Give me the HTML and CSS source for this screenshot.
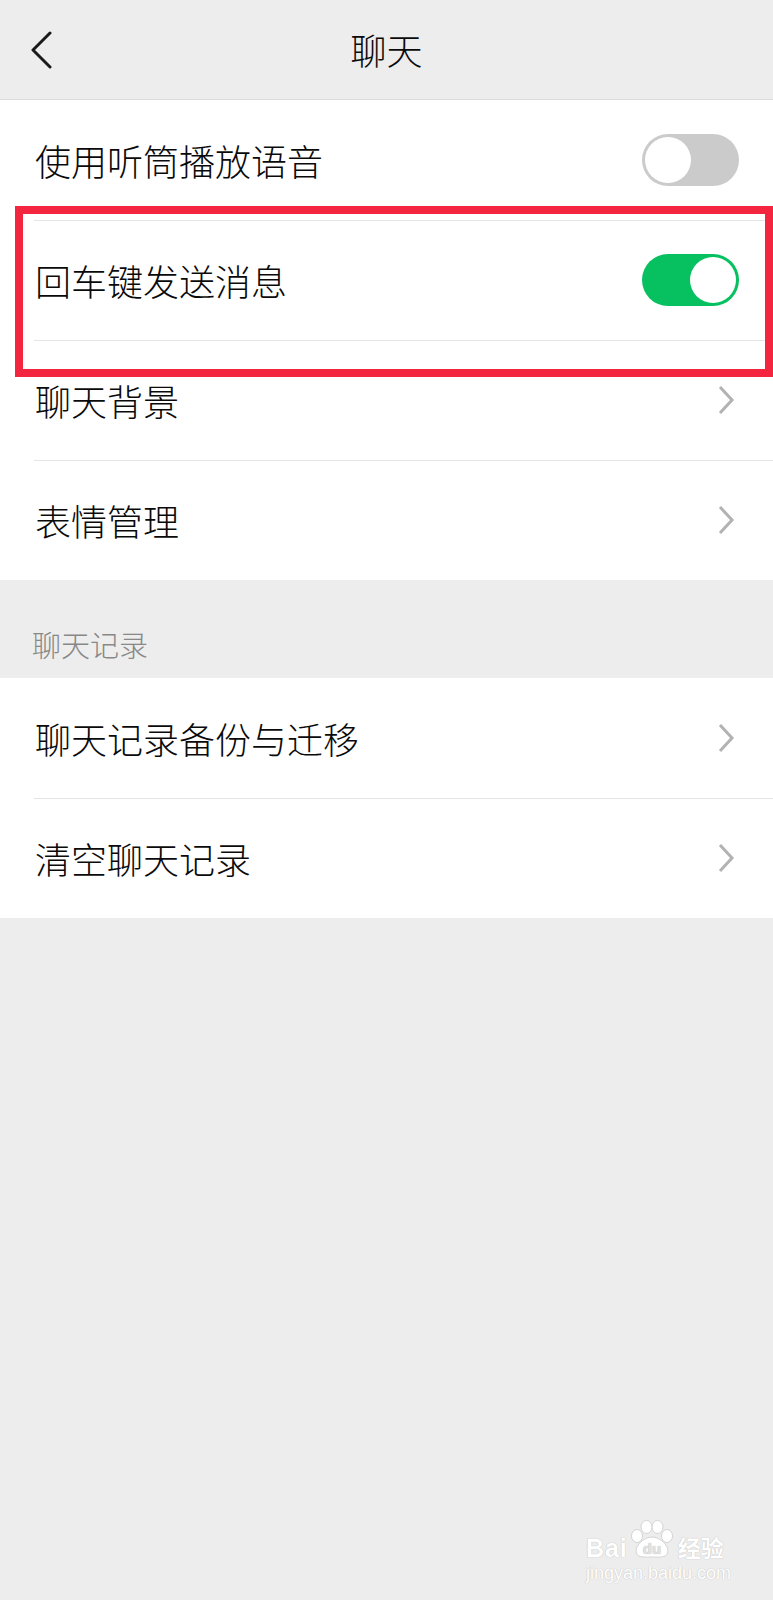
FILE: index.html
```html
<!DOCTYPE html>
<html>
<head>
  <meta charset="utf-8">
  <title>聊天</title>
  <link rel="stylesheet" href="styles.css">
</head>
<body>
  <div class="page">
    <div class="topbar">
      <span class="back">
        <svg width="24" height="38" viewBox="0 0 24 38"><polyline points="20,2 3,19 20,36" fill="none" stroke="#1a1a1a" stroke-width="3" stroke-linecap="round" stroke-linejoin="round"/></svg>
      </span>
      <h1>聊天</h1>
      <span></span>
    </div>

    <div class="group">
      <div class="cell">
        <span class="label">使用听筒播放语音</span>
        <span class="switch"></span>
      </div>
      <div class="cell">
        <span class="label">回车键发送消息</span>
        <span class="switch on"></span>
      </div>
      <div class="cell">
        <span class="label">聊天背景</span>
        <svg class="arrow" width="18" height="30" viewBox="0 0 18 30"><polyline points="3,2 15,15 3,28" fill="none" stroke="#b2b2b2" stroke-width="3"/></svg>
      </div>
      <div class="cell">
        <span class="label">表情管理</span>
        <svg class="arrow" width="18" height="30" viewBox="0 0 18 30"><polyline points="3,2 15,15 3,28" fill="none" stroke="#b2b2b2" stroke-width="3"/></svg>
      </div>
      <!-- red annotation box -->
      <div class="mark"></div>
    </div>

    <div class="group-title">聊天记录</div>

    <div class="group">
      <div class="cell">
        <span class="label">聊天记录备份与迁移</span>
        <svg class="arrow" width="18" height="30" viewBox="0 0 18 30"><polyline points="3,2 15,15 3,28" fill="none" stroke="#b2b2b2" stroke-width="3"/></svg>
      </div>
      <div class="cell">
        <span class="label">清空聊天记录</span>
        <svg class="arrow" width="18" height="30" viewBox="0 0 18 30"><polyline points="3,2 15,15 3,28" fill="none" stroke="#b2b2b2" stroke-width="3"/></svg>
      </div>
    </div>

    <div class="watermark">
      <div class="wm-top">
        <span class="wm-bai">Bai</span>
        <svg class="paw" width="44" height="38" viewBox="0 0 44 38">
          <g fill="#fff" stroke="#d4d4d4" stroke-width="1">
            <ellipse cx="7" cy="16" rx="5.5" ry="6.5"/>
            <ellipse cx="16.5" cy="7" rx="5.5" ry="6.5"/>
            <ellipse cx="27.5" cy="7" rx="5.5" ry="6.5"/>
            <ellipse cx="37" cy="16" rx="5.5" ry="6.5"/>
            <path d="M22 17 C30 17 38 25 38 31 C38 37 32 37.5 22 37 C12 37.5 6 37 6 31 C6 25 14 17 22 17 Z"/>
          </g>
          <text x="22" y="34" text-anchor="middle" font-family="Liberation Sans, sans-serif" font-weight="bold" font-size="15" fill="#e2e2e2">du</text>
        </svg>
        <span class="wm-jy">经验</span>
      </div>
      <div class="wm-url">jingyan.baidu.com</div>
    </div>
  </div>
</body>
</html>
```

FILE: styles.css
```css
body {
  margin: 0;
  background-color: #ededed;
  font-family: "Noto Sans CJK SC", "Noto Sans", sans-serif;
  color: #0a0a0a;
}

.page {
  position: relative;
  min-height: 1600px;
}

.topbar {
  height: 100px;
  box-sizing: border-box;
  border-bottom: 1px solid #dcdcdc;
  display: grid;
  grid-template-columns: 1fr auto 1fr;
  align-items: center;
}

.back {
  padding-left: 30px;
  display: flex;
  align-items: center;
}

.topbar h1 {
  margin: 0;
  font-size: 36px;
  font-weight: 300;
  line-height: 1;
  padding-bottom: 2px;
}

.group {
  position: relative;
  background-color: #fff;
}

.cell {
  position: relative;
  height: 120px;
  display: flex;
  align-items: center;
  justify-content: space-between;
  padding: 0 34px 0 35px;
}

.cell + .cell::before {
  content: "";
  position: absolute;
  top: 0;
  left: 34px;
  right: 0;
  height: 1px;
  background-color: #e5e5e5;
}

.label {
  font-size: 36px;
  font-weight: 300;
  line-height: 1;
}

.arrow {
  margin-right: 4px;
}

.switch {
  position: relative;
  width: 97px;
  height: 52px;
  border-radius: 26px;
  background-color: #cbcbcb;
}

.switch::after {
  content: "";
  position: absolute;
  top: 3px;
  left: 3px;
  width: 46px;
  height: 46px;
  border-radius: 50%;
  background-color: #fff;
}

.switch.on {
  background-color: #07c160;
}

.switch.on::after {
  left: 48px;
}

.mark {
  position: absolute;
  top: 106px;
  left: 15px;
  right: 0;
  height: 171px;
  box-sizing: border-box;
  border: 8px solid #f4253f;
}

.group-title {
  height: 98px;
  box-sizing: border-box;
  padding: 46px 0 0 32px;
  font-size: 29px;
  font-weight: 300;
  line-height: 36px;
  color: #888;
}

.watermark {
  position: absolute;
  right: 42px;
  bottom: 17px;
  color: #fff;
  font-family: "Liberation Sans", sans-serif;
  text-shadow: 0 0 1px #c4c4c4, 0 0 1px #c4c4c4;
}

.wm-top {
  display: flex;
  align-items: flex-end;
}

.wm-bai {
  font-size: 25px;
  font-weight: bold;
  line-height: 20px;
  letter-spacing: 1px;
}

.paw {
  margin: 0 2px;
}

.wm-jy {
  font-family: "Noto Sans CJK SC", sans-serif;
  font-size: 23px;
  font-weight: bold;
  line-height: 22px;
  margin-left: 2px;
}

.wm-url {
  font-size: 18px;
  line-height: 20px;
  margin-top: 5px;
}
```
